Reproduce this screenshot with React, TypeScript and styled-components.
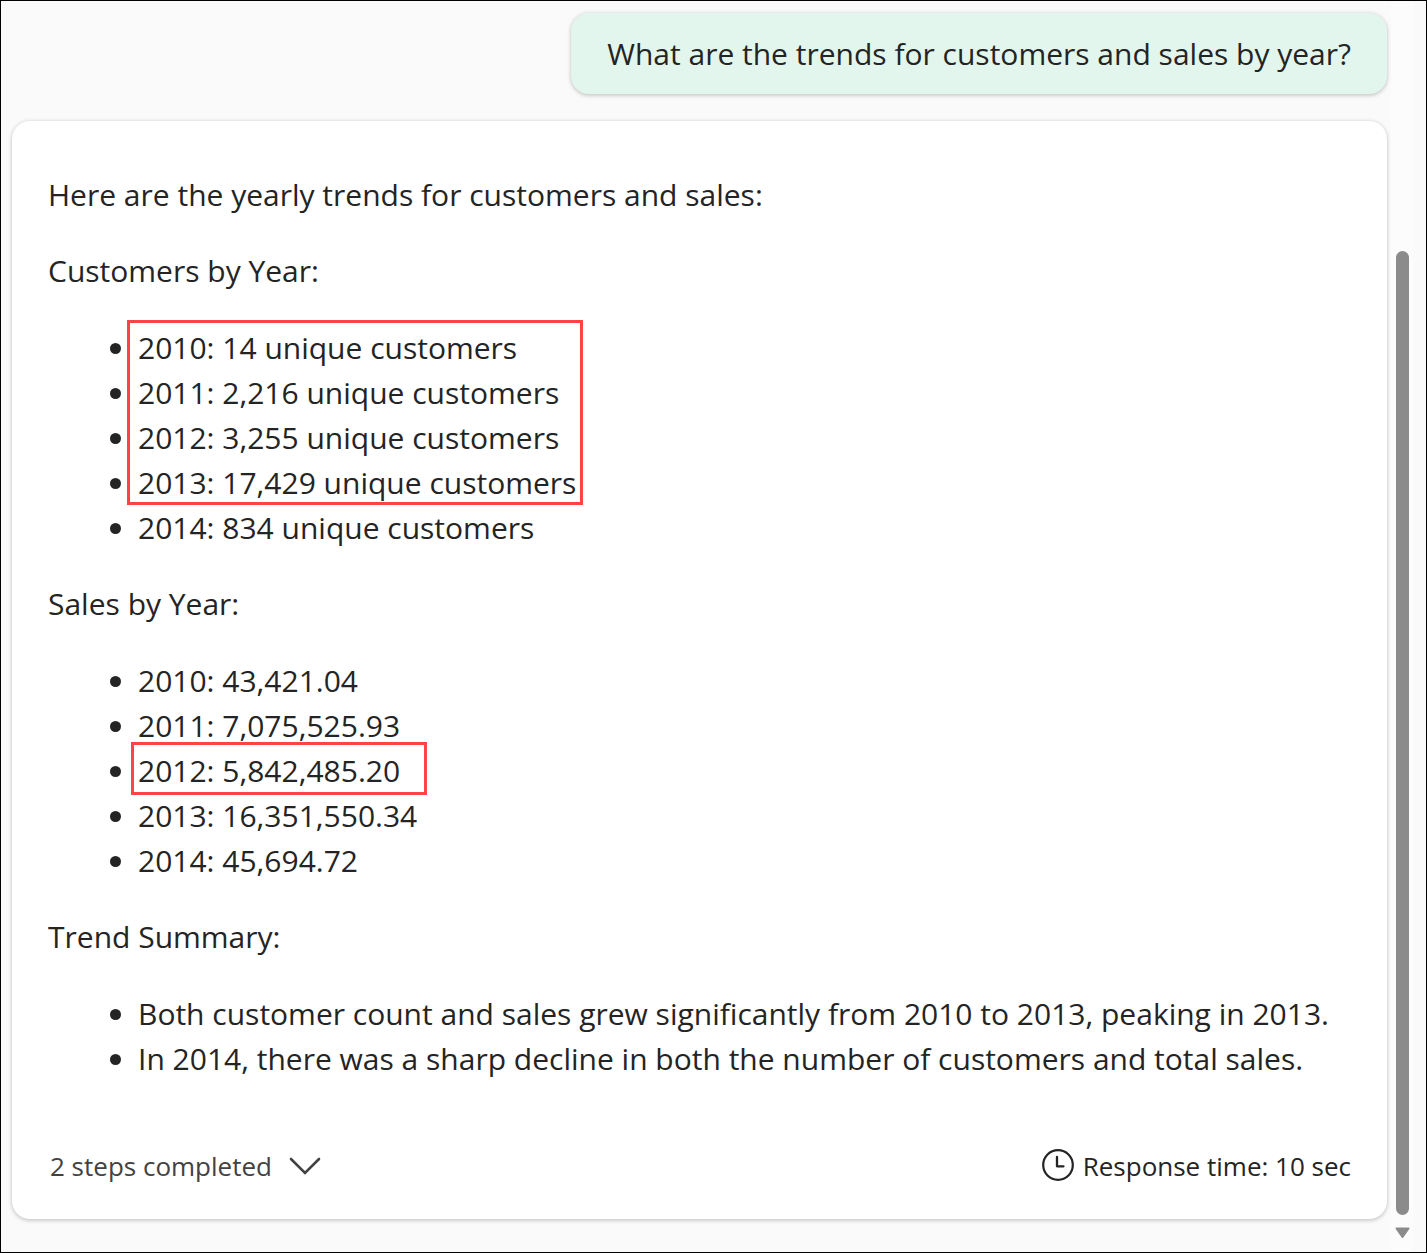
import React from "react";
import styled, { createGlobalStyle } from "styled-components";

const GlobalStyle = createGlobalStyle`
  *, *::before, *::after { box-sizing: border-box; }
  body { margin: 0; background: #fafafa; }
`;

const Frame = styled.div`
  display: flex;
  min-height: 100vh;
  padding-right: 13px;
  border: 1px solid #000;
  background: #fafafa;
  color: #242424;
  font-family: "Segoe UI", "Open Sans", "Noto Sans", sans-serif;
  font-size: 30px;
  line-height: 45px;
`;

const Conversation = styled.main`
  flex: 1;
  min-width: 0;
  display: flex;
  flex-direction: column;
  gap: 27px;
  padding: 12px 4px 32px 11px;
`;

const Surface = styled.div`
  border-radius: 18px;
  box-shadow: 0 0 4px rgba(0, 0, 0, 0.12), 0 2px 4px rgba(0, 0, 0, 0.14);
`;

const Question = styled(Surface)`
  align-self: flex-end;
  padding: 18px 36px;
  background: #e3f6ed;
`;

const Answer = styled(Surface)`
  padding: 51px 36px 35px;
  background: #fff;
`;

const Paragraph = styled.p`
  margin: 0;
`;

const Heading = styled.p`
  margin: 31px 0 32px;
`;

const List = styled.ul`
  margin: 0;
  padding-left: 90px;
`;

const Item = styled.li`
  position: relative;
`;

const Callout = styled.span<{ $left: number; $top: number; $width: number; $height: number }>`
  position: absolute;
  left: ${(p) => p.$left}px;
  top: ${(p) => p.$top}px;
  width: ${(p) => p.$width}px;
  height: ${(p) => p.$height}px;
  border: 3px solid #fd4344;
  pointer-events: none;
`;

const Footer = styled.footer`
  display: flex;
  justify-content: space-between;
  align-items: center;
  margin-top: 67px;
  font-size: 26px;
  line-height: 36px;
`;

const StepsButton = styled.button`
  display: flex;
  align-items: center;
  gap: 17px;
  padding: 0 2px;
  border: 0;
  background: none;
  color: #424242;
  font: inherit;
`;

const ResponseTime = styled.div`
  display: flex;
  align-items: center;
  gap: 8px;
`;

const ScrollTrack = styled.div`
  display: flex;
  flex-direction: column;
  align-items: center;
  gap: 12px;
  width: 22px;
  padding: 250px 0 13px;
  background: #fcfcfc;
`;

const ScrollThumb = styled.div`
  flex: 1;
  width: 13px;
  border-radius: 7px;
  background: #8b8b8b;
`;

const customers = ["2010: 14", "2011: 2,216", "2012: 3,255", "2013: 17,429", "2014: 834"];
const sales = [
  "2010: 43,421.04",
  "2011: 7,075,525.93",
  "2012: 5,842,485.20",
  "2013: 16,351,550.34",
  "2014: 45,694.72",
];

export default function App() {
  return (
    <>
      <GlobalStyle />
      <Frame>
        <Conversation>
          <Question>What are the trends for customers and sales by year?</Question>
          <Answer>
            <Paragraph>Here are the yearly trends for customers and sales:</Paragraph>
            <Heading>Customers by Year:</Heading>
            <List>
              {customers.map((entry, i) => (
                <Item key={entry}>
                  {entry} unique customers
                  {i === 0 && <Callout $left={-11} $top={-5} $width={456} $height={185} />}
                </Item>
              ))}
            </List>
            <Heading>Sales by Year:</Heading>
            <List>
              {sales.map((entry, i) => (
                <Item key={entry}>
                  {entry}
                  {i === 2 && <Callout $left={-7} $top={-6} $width={296} $height={53} />}
                </Item>
              ))}
            </List>
            <Heading>Trend Summary:</Heading>
            <List>
              <Item>Both customer count and sales grew significantly from 2010 to 2013, peaking in 2013.</Item>
              <Item>In 2014, there was a sharp decline in both the number of customers and total sales.</Item>
            </List>
            <Footer>
              <StepsButton type="button">
                2 steps completed
                <svg width="32" height="18" viewBox="0 0 32 18" fill="none" aria-hidden="true">
                  <path d="M2 2L16 16L30 2" stroke="currentColor" strokeWidth="2.6" strokeLinecap="round" strokeLinejoin="miter" />
                </svg>
              </StepsButton>
              <ResponseTime>
                <svg width="34" height="34" viewBox="0 0 34 34" fill="none" aria-hidden="true">
                  <circle cx="17" cy="16" r="14.8" stroke="currentColor" strokeWidth="2.2" />
                  <path d="M16 8V17.3H22.5" stroke="currentColor" strokeWidth="2.3" strokeLinecap="round" strokeLinejoin="round" />
                </svg>
                <span>Response time: 10 sec</span>
              </ResponseTime>
            </Footer>
          </Answer>
        </Conversation>
        <ScrollTrack aria-hidden="true">
          <ScrollThumb />
          <svg width="15" height="12" viewBox="0 0 15 12">
            <path d="M1.5 1.5H13.5L7.5 10Z" fill="#8b8b8b" stroke="#8b8b8b" strokeWidth="2" strokeLinejoin="round" />
          </svg>
        </ScrollTrack>
      </Frame>
    </>
  );
}
